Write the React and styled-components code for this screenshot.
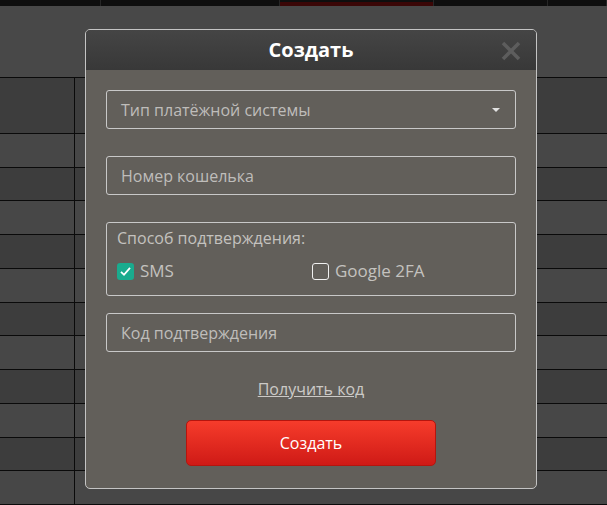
import React, { useState } from 'react';
import styled, { createGlobalStyle } from 'styled-components';

const GlobalStyle = createGlobalStyle`
  html, body {
    margin: 0;
    padding: 0;
    background: #484848;
    font-family: "Open Sans", "Liberation Sans", sans-serif;
  }
`;

const Page = styled.div`
  position: relative;
  width: 607px;
  height: 505px;
  overflow: hidden;
  display: flex;
  flex-direction: column;
  background: #484848;
`;

const TopStrip = styled.div`
  height: 6px;
  display: flex;
  background: #0e0e0e;
`;

const TopCell = styled.div`
  width: ${p => p.w}px;
  border-right: 1px solid #262626;
  box-sizing: border-box;
  ${p => p.active && `
    background: linear-gradient(#0e0e0e 0 2px, #3a0606 2px);
  `}
`;

const TableHead = styled.div`
  height: 72px;
  border-bottom: 1px solid #0a0a0a;
`;

const Row = styled.div`
  height: ${p => p.h || 33}px;
  display: grid;
  grid-template-columns: 75px 1fr;
  background: ${p => (p.dark ? '#3d3d3d' : '#474747')};
  border-bottom: 1px solid #0a0a0a;
  & > div:first-child {
    border-right: 1px solid #0a0a0a;
  }
`;

const Modal = styled.div`
  position: absolute;
  left: 85px;
  top: 29px;
  width: 452px;
  height: 460px;
  box-sizing: border-box;
  border: 1px solid #c4c4c4;
  border-radius: 5px;
  overflow: hidden;
  background: #625f5a;
  display: flex;
  flex-direction: column;
`;

const ModalHeader = styled.div`
  height: 40px;
  flex-shrink: 0;
  background: linear-gradient(#454545, #383838);
  display: flex;
  align-items: center;
  justify-content: center;
  position: relative;
`;

const Title = styled.h2`
  margin: 0;
  color: #fff;
  font-size: 20px;
  font-weight: 700;
  line-height: 1;
`;

const Close = styled.button`
  position: absolute;
  right: 15px;
  top: 11px;
  width: 20px;
  height: 20px;
  padding: 0;
  border: none;
  background: none;
  cursor: pointer;
`;

const ModalBody = styled.div`
  padding: 20px 20px 0;
  display: flex;
  flex-direction: column;
`;

const Field = styled.div`
  position: relative;
  height: 39px;
  box-sizing: border-box;
  border: 1px solid #c8c8c8;
  border-radius: 3px;
  display: flex;
  align-items: center;
  padding: 0 14px;
  margin-bottom: ${p => p.mb || 0}px;
  color: #bfbdba;
  font-size: 16px;
`;

const Caret = styled.span`
  position: absolute;
  right: 15px;
  top: 17px;
  width: 0;
  height: 0;
  border-left: 4px solid transparent;
  border-right: 4px solid transparent;
  border-top: 4px solid #e2e2e2;
`;

const Fieldset = styled.div`
  height: 74px;
  box-sizing: border-box;
  border: 1px solid #c8c8c8;
  border-radius: 3px;
  padding: 5px 10px 0;
  margin-bottom: 17px;
  color: #c4c2bf;
  font-size: 16px;
`;

const Legend = styled.div`
  line-height: 20px;
`;

const Options = styled.div`
  margin-top: 13px;
  display: grid;
  grid-template-columns: 195px 1fr;
  font-size: 17px;
`;

const Option = styled.label`
  display: flex;
  align-items: center;
  gap: 6px;
  cursor: pointer;
  line-height: 20px;
`;

const Box = styled.span`
  width: 17px;
  height: 17px;
  box-sizing: border-box;
  border-radius: 3px;
  display: flex;
  align-items: center;
  justify-content: center;
  background: ${p => (p.checked ? '#1aab8e' : 'transparent')};
  border: ${p => (p.checked ? 'none' : '1.5px solid #f0f0f0')};
`;

const GetCode = styled.a`
  align-self: center;
  margin-top: 27px;
  color: #cccac7;
  font-size: 16px;
  text-decoration: underline;
  line-height: 20px;
  cursor: pointer;
`;

const Submit = styled.button`
  align-self: center;
  margin-top: 21px;
  width: 250px;
  height: 46px;
  border: 1px solid #b5150e;
  border-radius: 5px;
  background: linear-gradient(#f63c2b, #cf1a16);
  color: #fff;
  font-family: inherit;
  font-size: 16px;
  cursor: pointer;
`;

const topCells = [
  { w: 101 },
  { w: 179 },
  { w: 154, active: true },
  { w: 114 },
  { w: 59 },
];

const Check = () => (
  <svg width="13" height="13" viewBox="0 0 13 13">
    <path d="M2 6.8 L5 9.8 L11 2.8" fill="none" stroke="#fff" strokeWidth="1.8" />
  </svg>
);

export default function App() {
  const [method, setMethod] = useState('sms');

  return (
    <Page>
      <GlobalStyle />
      <TopStrip>
        {topCells.map((c, i) => (
          <TopCell key={i} w={c.w} active={c.active} />
        ))}
      </TopStrip>
      <TableHead />
      <Row dark h={55}><div /><div /></Row>
      {Array.from({ length: 11 }).map((_, i) => (
        <Row key={i} dark={i % 2 === 1}><div /><div /></Row>
      ))}

      <Modal>
        <ModalHeader>
          <Title>Создать</Title>
          <Close aria-label="close">
            <svg width="20" height="20" viewBox="0 0 20 20">
              <path d="M2 2 L18 18 M18 2 L2 18" stroke="#5d5d5d" strokeWidth="3.6" />
            </svg>
          </Close>
        </ModalHeader>
        <ModalBody>
          <Field mb={27}>
            Тип платёжной системы
            <Caret />
          </Field>
          <Field mb={27}>Номер кошелька</Field>
          <Fieldset>
            <Legend>Способ подтверждения:</Legend>
            <Options>
              <Option onClick={() => setMethod('sms')}>
                <Box checked={method === 'sms'}>{method === 'sms' && <Check />}</Box>
                SMS
              </Option>
              <Option onClick={() => setMethod('2fa')}>
                <Box checked={method === '2fa'}>{method === '2fa' && <Check />}</Box>
                Google 2FA
              </Option>
            </Options>
          </Fieldset>
          <Field>Код подтверждения</Field>
          <GetCode>Получить код</GetCode>
          <Submit>Создать</Submit>
        </ModalBody>
      </Modal>
    </Page>
  );
}
